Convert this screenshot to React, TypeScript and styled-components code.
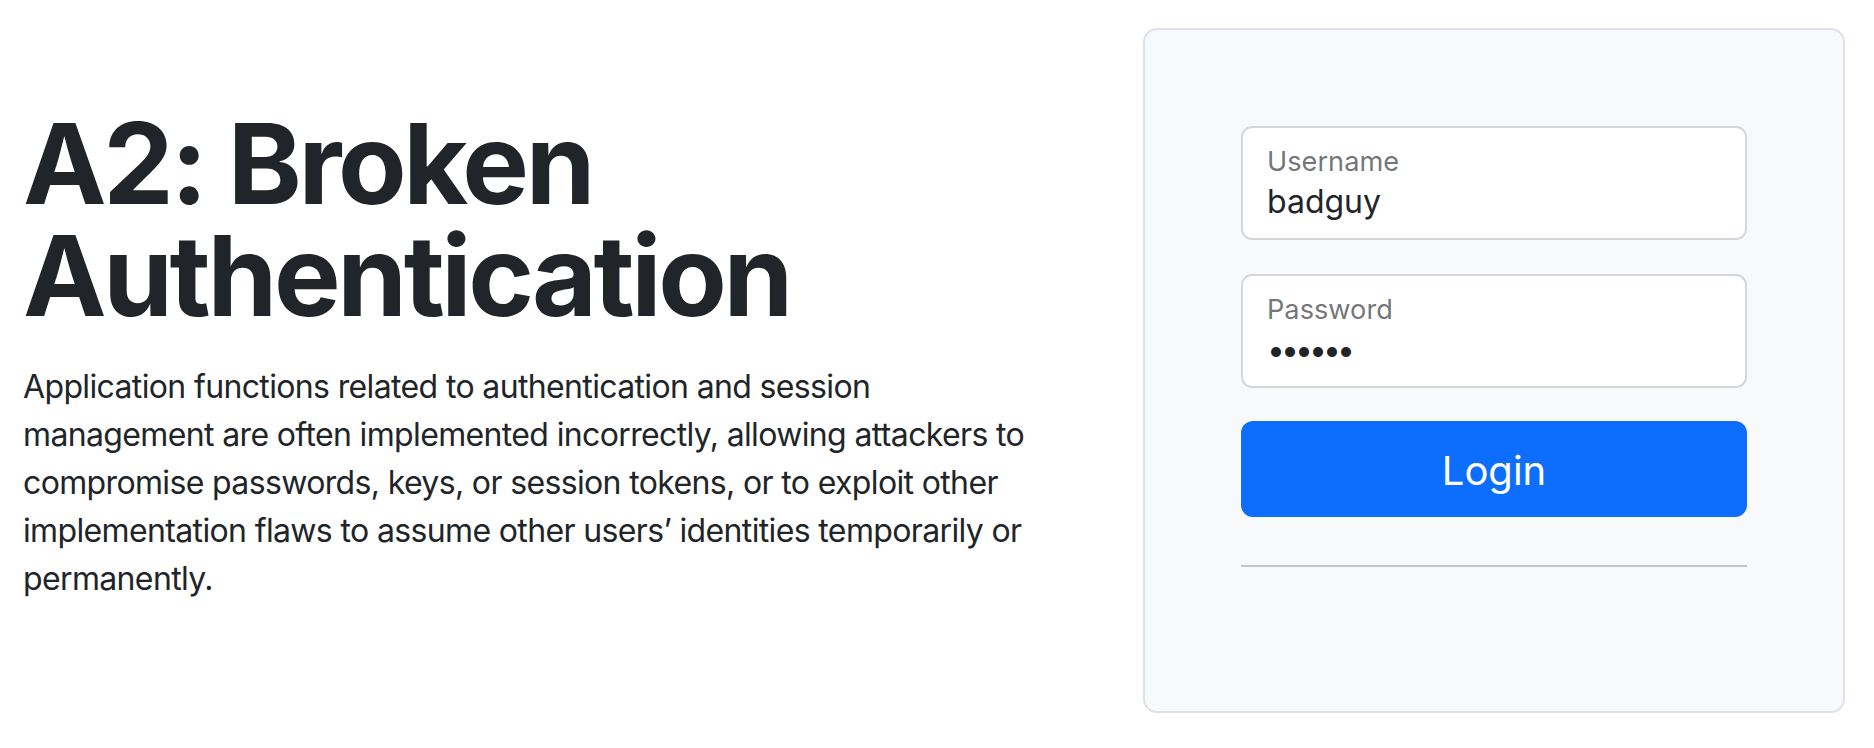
import React from 'react';
import styled, { createGlobalStyle } from 'styled-components';

const GlobalStyle = createGlobalStyle`
	*, *::before, *::after {
		box-sizing: border-box;
	}

	body {
		margin: 0;
		background: #fff;
		color: #212529;
		font-family: Inter, "Noto Sans", "Liberation Sans", sans-serif;
		-webkit-font-smoothing: antialiased;
	}
`;

const Page = styled.main`
	display: flex;
	align-items: center;
	padding: 28px 29px 34px 23px;
`;

const Intro = styled.section`
	flex: 1 1 auto;
	min-width: 0;
	padding-right: 48px;
`;

const Title = styled.h1`
	margin: 0 0 32px;
	font-size: 112px;
	font-weight: 700;
	line-height: 1;
	letter-spacing: -0.03em;
	color: #212529;
`;

const Lead = styled.p`
	max-width: 1045px;
	margin: 0 0 32px;
	font-size: 32px;
	line-height: 48px;
	letter-spacing: -0.02em;
	color: #212529;
`;

const Card = styled.form`
	flex: 0 0 702px;
	width: 702px;
	display: flex;
	flex-direction: column;
	padding: 96px;
	border: 2px solid #dee2e6;
	border-radius: 14px;
	background: #f8f9fa;
`;

const Field = styled.label<{ gap: number }>`
	display: flex;
	flex-direction: column;
	height: 114px;
	margin-bottom: ${({ gap }) => gap}px;
	padding: 20px 24px 0;
	border: 2px solid #d3d7dc;
	border-radius: 11px;
	background: #fff;
`;

const Caption = styled.span`
	font-size: 27.2px;
	line-height: 27px;
	color: rgba(33, 37, 41, 0.65);
`;

const Input = styled.input<{ masked?: boolean }>`
	width: 100%;
	min-width: 0;
	height: 48px;
	margin-top: 3px;
	padding: 0;
	border: 0;
	outline: none;
	background: transparent;
	font-family: inherit;
	font-size: 32px;
	line-height: 48px;
	color: #212529;
	letter-spacing: ${({ masked }) => (masked ? '-4px' : 'normal')};
`;

const SubmitButton = styled.button`
	height: 96px;
	width: 100%;
	padding: 4px 0 0;
	border: 0;
	border-radius: 12px;
	background: #0d6efd;
	font-family: inherit;
	font-size: 40px;
	line-height: 1.5;
	color: #fff;
	cursor: pointer;
`;

const Divider = styled.hr`
	margin: 48px 0;
	border: 0;
	border-top: 2px solid #c4c5c7;
`;

export default function App() {
	return (
		<>
			<GlobalStyle />
			<Page>
				<Intro>
					<Title>
						A2: Broken
						<br />
						Authentication
					</Title>
					<Lead>
						Application functions related to authentication and session
						management are often implemented incorrectly, allowing attackers to
						compromise passwords, keys, or session tokens, or to exploit other
						implementation flaws to assume other users’ identities temporarily
						or permanently.
					</Lead>
				</Intro>
				<Card onSubmit={(e) => e.preventDefault()}>
					<Field gap={34}>
						<Caption>Username</Caption>
						<Input type="text" value="badguy" readOnly />
					</Field>
					<Field gap={33}>
						<Caption>Password</Caption>
						<Input type="password" value="secret" masked readOnly />
					</Field>
					<SubmitButton type="submit">Login</SubmitButton>
					<Divider />
				</Card>
			</Page>
		</>
	);
}
